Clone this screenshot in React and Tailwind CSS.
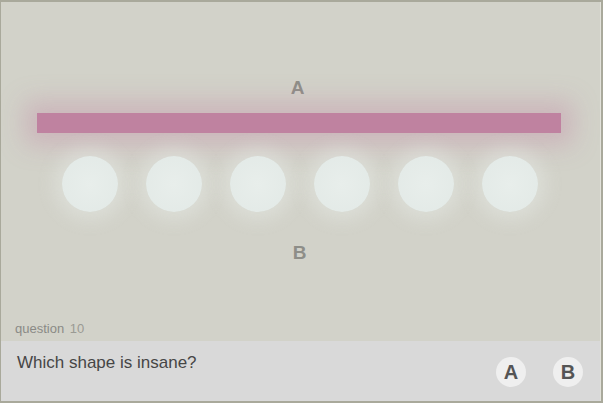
export default function App() {
  const dots = [0, 1, 2, 3, 4, 5];
  return (
    <div className="w-[603px] h-[403px] flex flex-col bg-[#a9a99b] pt-[2px] pl-[1px] pr-[2px] pb-[2px] font-['Liberation_Sans',Arial,sans-serif]">
      <div className="flex-1 flex flex-col border-r border-[#e2e2da]">
        <div className="h-[339px] bg-[#d2d2c9] flex flex-col relative">
          <div className="h-[75px]" />
          <div className="text-center text-[19px] leading-[22px] font-bold text-[#8e8e88] pr-[6px]">A</div>
          <div className="h-[14px]" />
          <div className="ml-[36px] w-[524px] h-[20px] bg-[#bf82a0] shadow-[0_0_24px_12px_rgba(191,130,160,0.35)]" />
          <div className="h-[23px]" />
          <div className="flex gap-[28px] ml-[61px]">
            {dots.map((d) => (
              <div
                key={d}
                className="w-[56px] h-[56px] rounded-full bg-[radial-gradient(circle,#e8eeeb_0%,#e2e9e6_100%)] shadow-[0_0_18px_8px_rgba(232,237,233,0.45)]"
              />
            ))}
          </div>
          <div className="h-[30px]" />
          <div className="text-center text-[19px] leading-[22px] font-bold text-[#8e8e88] pr-[2px]">B</div>
          <div className="flex-1" />
          <div className="px-[14px] pb-[5px] text-[13px] leading-[14px] text-[#8a8a86]">
            question <span className="ml-[2px] text-[#9a9a94]">10</span>
          </div>
        </div>
        <div className="flex-1 bg-[#d9d9d9] flex items-start justify-between">
          <div className="pl-[16px] pt-[12px] text-[17px] leading-[20px] text-[#464646]">Which shape is insane?</div>
          <div className="flex gap-[27px] pt-[16px] pr-[17px]">
            <div className="w-[30px] h-[30px] rounded-full bg-[#efefef] flex items-center justify-center text-[20px] font-bold text-[#555555]">A</div>
            <div className="w-[30px] h-[30px] rounded-full bg-[#efefef] flex items-center justify-center text-[20px] font-bold text-[#555555]">B</div>
          </div>
        </div>
      </div>
    </div>
  );
}
